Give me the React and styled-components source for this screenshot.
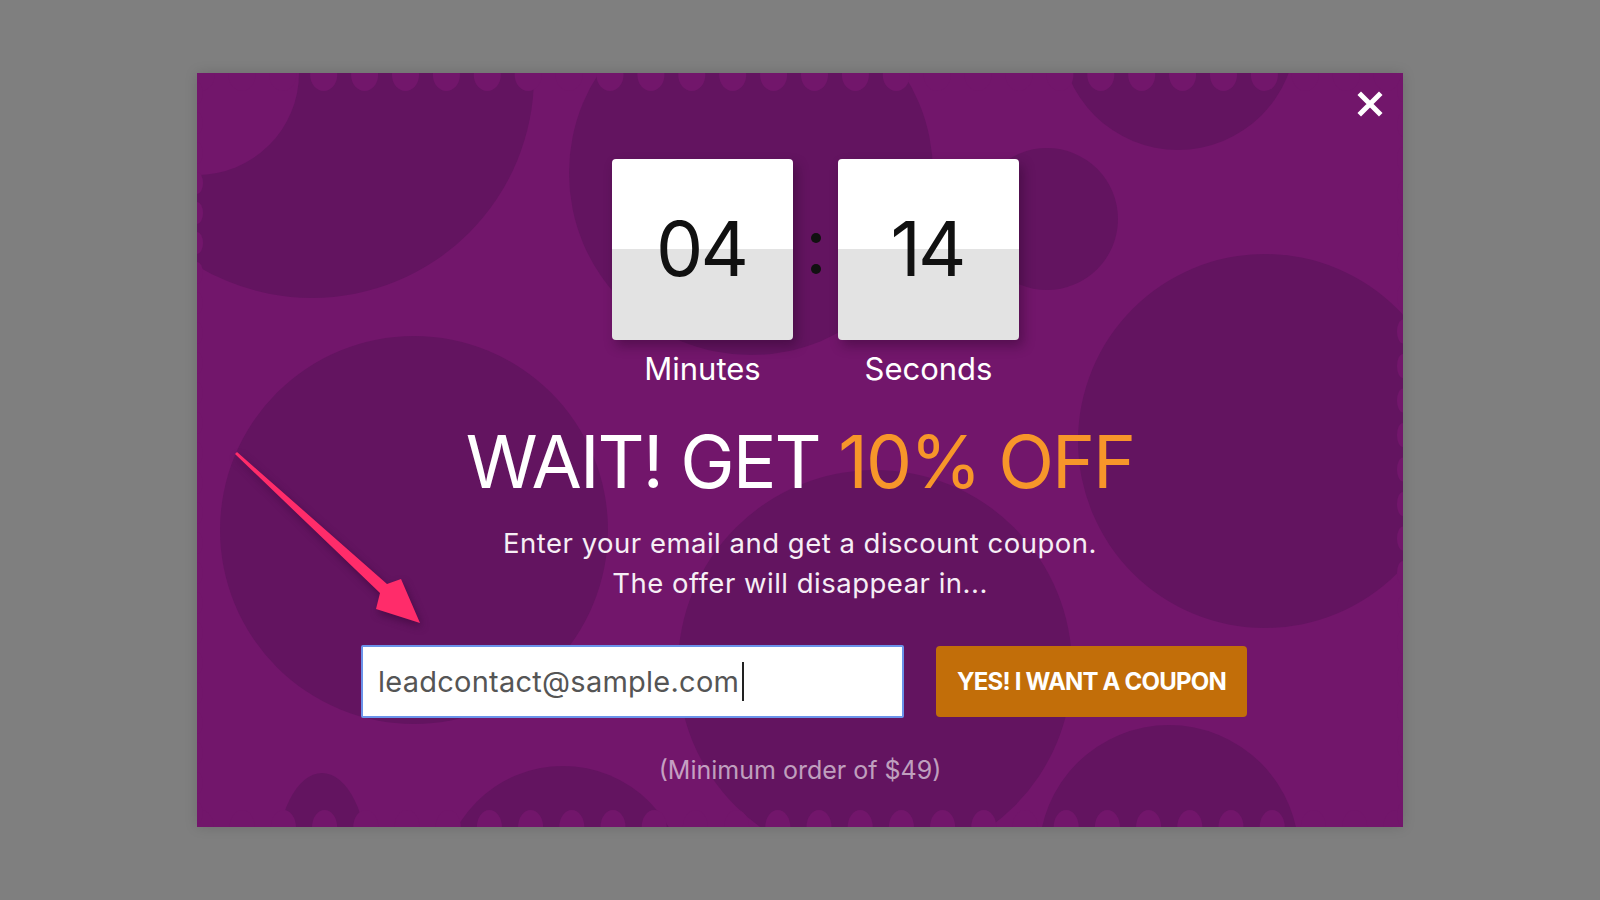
import React from "react";
import styled, { createGlobalStyle } from "styled-components";

const GlobalStyle = createGlobalStyle`
  html, body {
    margin: 0;
    padding: 0;
    background: #7f7f7f;
  }
  * {
    box-sizing: border-box;
  }
`;

const BASE = "#72166b";
const DARK = "#631460";

// dark blobs behind the popup, in popup coordinates
const circles = [
  [115, 3, 222],
  [554, 100, 182],
  [850, 146, 71],
  [981, -41, 118],
  [1068, 368, 187],
  [217, 457, 194],
  [678, 594, 197],
  [366, 815, 122],
  [972, 782, 130],
];

const range = (from, to, step) => {
  const out = [];
  for (let v = from; v <= to; v += step) out.push(v);
  return out;
};

const Backdrop = () => (
  <BackdropSvg viewBox="0 0 1206 754" preserveAspectRatio="none">
    {circles.map(([cx, cy, r], i) => (
      <circle key={i} cx={cx} cy={cy} r={r} fill={DARK} />
    ))}
    <ellipse cx={125} cy={792} rx={46} ry={92} fill={DARK} />
    <circle cx={0} cy={0} r={102} fill={BASE} />
    {range(4, 1206, 40.9).map((x) => (
      <ellipse key={"t" + x} cx={x} cy={2} rx={13.5} ry={16} fill={BASE} />
    ))}
    {range(4, 1206, 41.2).map((x) => (
      <ellipse key={"b" + x} cx={x} cy={754} rx={12.5} ry={17} fill={BASE} />
    ))}
    {range(12, 754, 34.5).map((y) => (
      <ellipse key={"r" + y} cx={1206} cy={y + 5} rx={6} ry={12} fill={BASE} />
    ))}
    {range(20, 754, 30).map((y) => (
      <ellipse key={"l" + y} cx={0} cy={y} rx={6} ry={11} fill={BASE} />
    ))}
  </BackdropSvg>
);

const PointerArrow = () => (
  <ArrowSvg width="200" height="190" viewBox="30 370 200 190">
    <polygon
      points="40,379 190,511 204,506 223,550 179,536 183,520 38,381"
      fill="#ff2c6a"
    />
  </ArrowSvg>
);

const CloseIcon = () => (
  <svg width="26" height="26" viewBox="0 0 26 26">
    <path
      d="M4 4 L22 22 M22 4 L4 22"
      stroke="#fff"
      strokeWidth="5"
      strokeLinecap="square"
    />
  </svg>
);

const App = () => (
  <Page>
    <GlobalStyle />
    <Modal>
      <Backdrop />
      <PointerArrow />
      <CloseButton aria-label="Close">
        <CloseIcon />
      </CloseButton>
      <Content>
        <Timer>
          <TimeUnit>
            <FlipCard>
              <Digits>04</Digits>
            </FlipCard>
            <UnitLabel>Minutes</UnitLabel>
          </TimeUnit>
          <Colon>
            <Dot />
            <Dot />
          </Colon>
          <TimeUnit>
            <FlipCard>
              <Digits>14</Digits>
            </FlipCard>
            <UnitLabel>Seconds</UnitLabel>
          </TimeUnit>
        </Timer>
        <Headline>
          WAIT! GET <Accent>10% OFF</Accent>
        </Headline>
        <Subtitle>
          Enter your email and get a discount coupon.
          <br />
          The offer will disappear in...
        </Subtitle>
        <Form>
          <EmailField>
            leadcontact@sample.com
            <Caret />
          </EmailField>
          <CouponButton>YES! I WANT A COUPON</CouponButton>
        </Form>
        <Note>(Minimum order of $49)</Note>
      </Content>
    </Modal>
  </Page>
);

export default App;

const Page = styled.div`
  min-height: 100vh;
  display: flex;
  align-items: center;
  justify-content: center;
  font-family: Inter, "Noto Sans", sans-serif;
`;

const Modal = styled.div`
  position: relative;
  width: 1206px;
  height: 754px;
  background: ${BASE};
  overflow: hidden;
  box-shadow: 0 0 12px rgba(0, 0, 0, 0.15);
`;

const BackdropSvg = styled.svg`
  position: absolute;
  inset: 0;
  width: 100%;
  height: 100%;
`;

const ArrowSvg = styled.svg`
  position: absolute;
  left: 30px;
  top: 370px;
  overflow: visible;
  filter: drop-shadow(2px 4px 4px rgba(40, 0, 40, 0.45));
`;

const CloseButton = styled.button`
  position: absolute;
  top: 18px;
  right: 20px;
  width: 26px;
  height: 26px;
  padding: 0;
  border: 0;
  background: none;
  display: flex;
  cursor: pointer;
`;

const Content = styled.div`
  position: relative;
  display: flex;
  flex-direction: column;
  align-items: center;
  padding-top: 86px;
`;

const Timer = styled.div`
  display: flex;
  align-items: flex-start;
  padding-left: 31px;
`;

const TimeUnit = styled.div`
  display: flex;
  flex-direction: column;
  align-items: center;
`;

const FlipCard = styled.div`
  width: 181px;
  height: 181px;
  border-radius: 4px;
  background: linear-gradient(#ffffff 50%, #e3e3e3 50%);
  box-shadow: 4px 6px 12px rgba(30, 0, 30, 0.35);
  display: flex;
  align-items: center;
  justify-content: center;
`;

const Digits = styled.span`
  font-size: 75px;
  font-weight: 400;
  letter-spacing: -3px;
  color: #111;
  line-height: 1;
  margin: -3px 0 0 -3px;
`;

const UnitLabel = styled.span`
  margin-top: 9px;
  font-size: 31px;
  line-height: 40px;
  color: #fff;
`;

const Colon = styled.div`
  width: 45px;
  height: 181px;
  padding-top: 8px;
  display: flex;
  flex-direction: column;
  align-items: center;
  justify-content: center;
  gap: 21px;
`;

const Dot = styled.span`
  width: 10px;
  height: 10px;
  border-radius: 50%;
  background: #111;
`;

const Headline = styled.h1`
  margin: 28px 0 0;
  font-size: 73px;
  font-weight: 400;
  letter-spacing: -2px;
  line-height: 90px;
  color: #fff;
  white-space: nowrap;
`;

const Accent = styled.span`
  color: #f7962a;
`;

const Subtitle = styled.p`
  margin: 16px 0 0;
  font-size: 27.5px;
  letter-spacing: 0.5px;
  line-height: 40px;
  color: #f6eef5;
  text-align: center;
`;

const Form = styled.div`
  display: flex;
  gap: 32px;
  margin-top: 42px;
  padding-left: 8px;
`;

const EmailField = styled.div`
  width: 543px;
  height: 73px;
  background: #fff;
  border: 2px solid #6a93ea;
  border-radius: 2px;
  padding: 0 15px;
  display: flex;
  align-items: center;
  font-size: 29px;
  letter-spacing: 0.25px;
  color: #555;
`;

const Caret = styled.span`
  width: 2px;
  height: 39px;
  margin-left: 3px;
  background: #222;
`;

const CouponButton = styled.button`
  width: 311px;
  height: 71px;
  margin-top: 1px;
  border: 0;
  border-radius: 4px;
  background: #c26e09;
  color: #fff;
  font-family: Inter, "Noto Sans", sans-serif;
  font-size: 24px;
  font-weight: 700;
  letter-spacing: -0.8px;
  cursor: pointer;
`;

const Note = styled.p`
  margin: 36px 0 0;
  font-size: 25px;
  line-height: 32px;
  color: rgba(255, 255, 255, 0.6);
`;
